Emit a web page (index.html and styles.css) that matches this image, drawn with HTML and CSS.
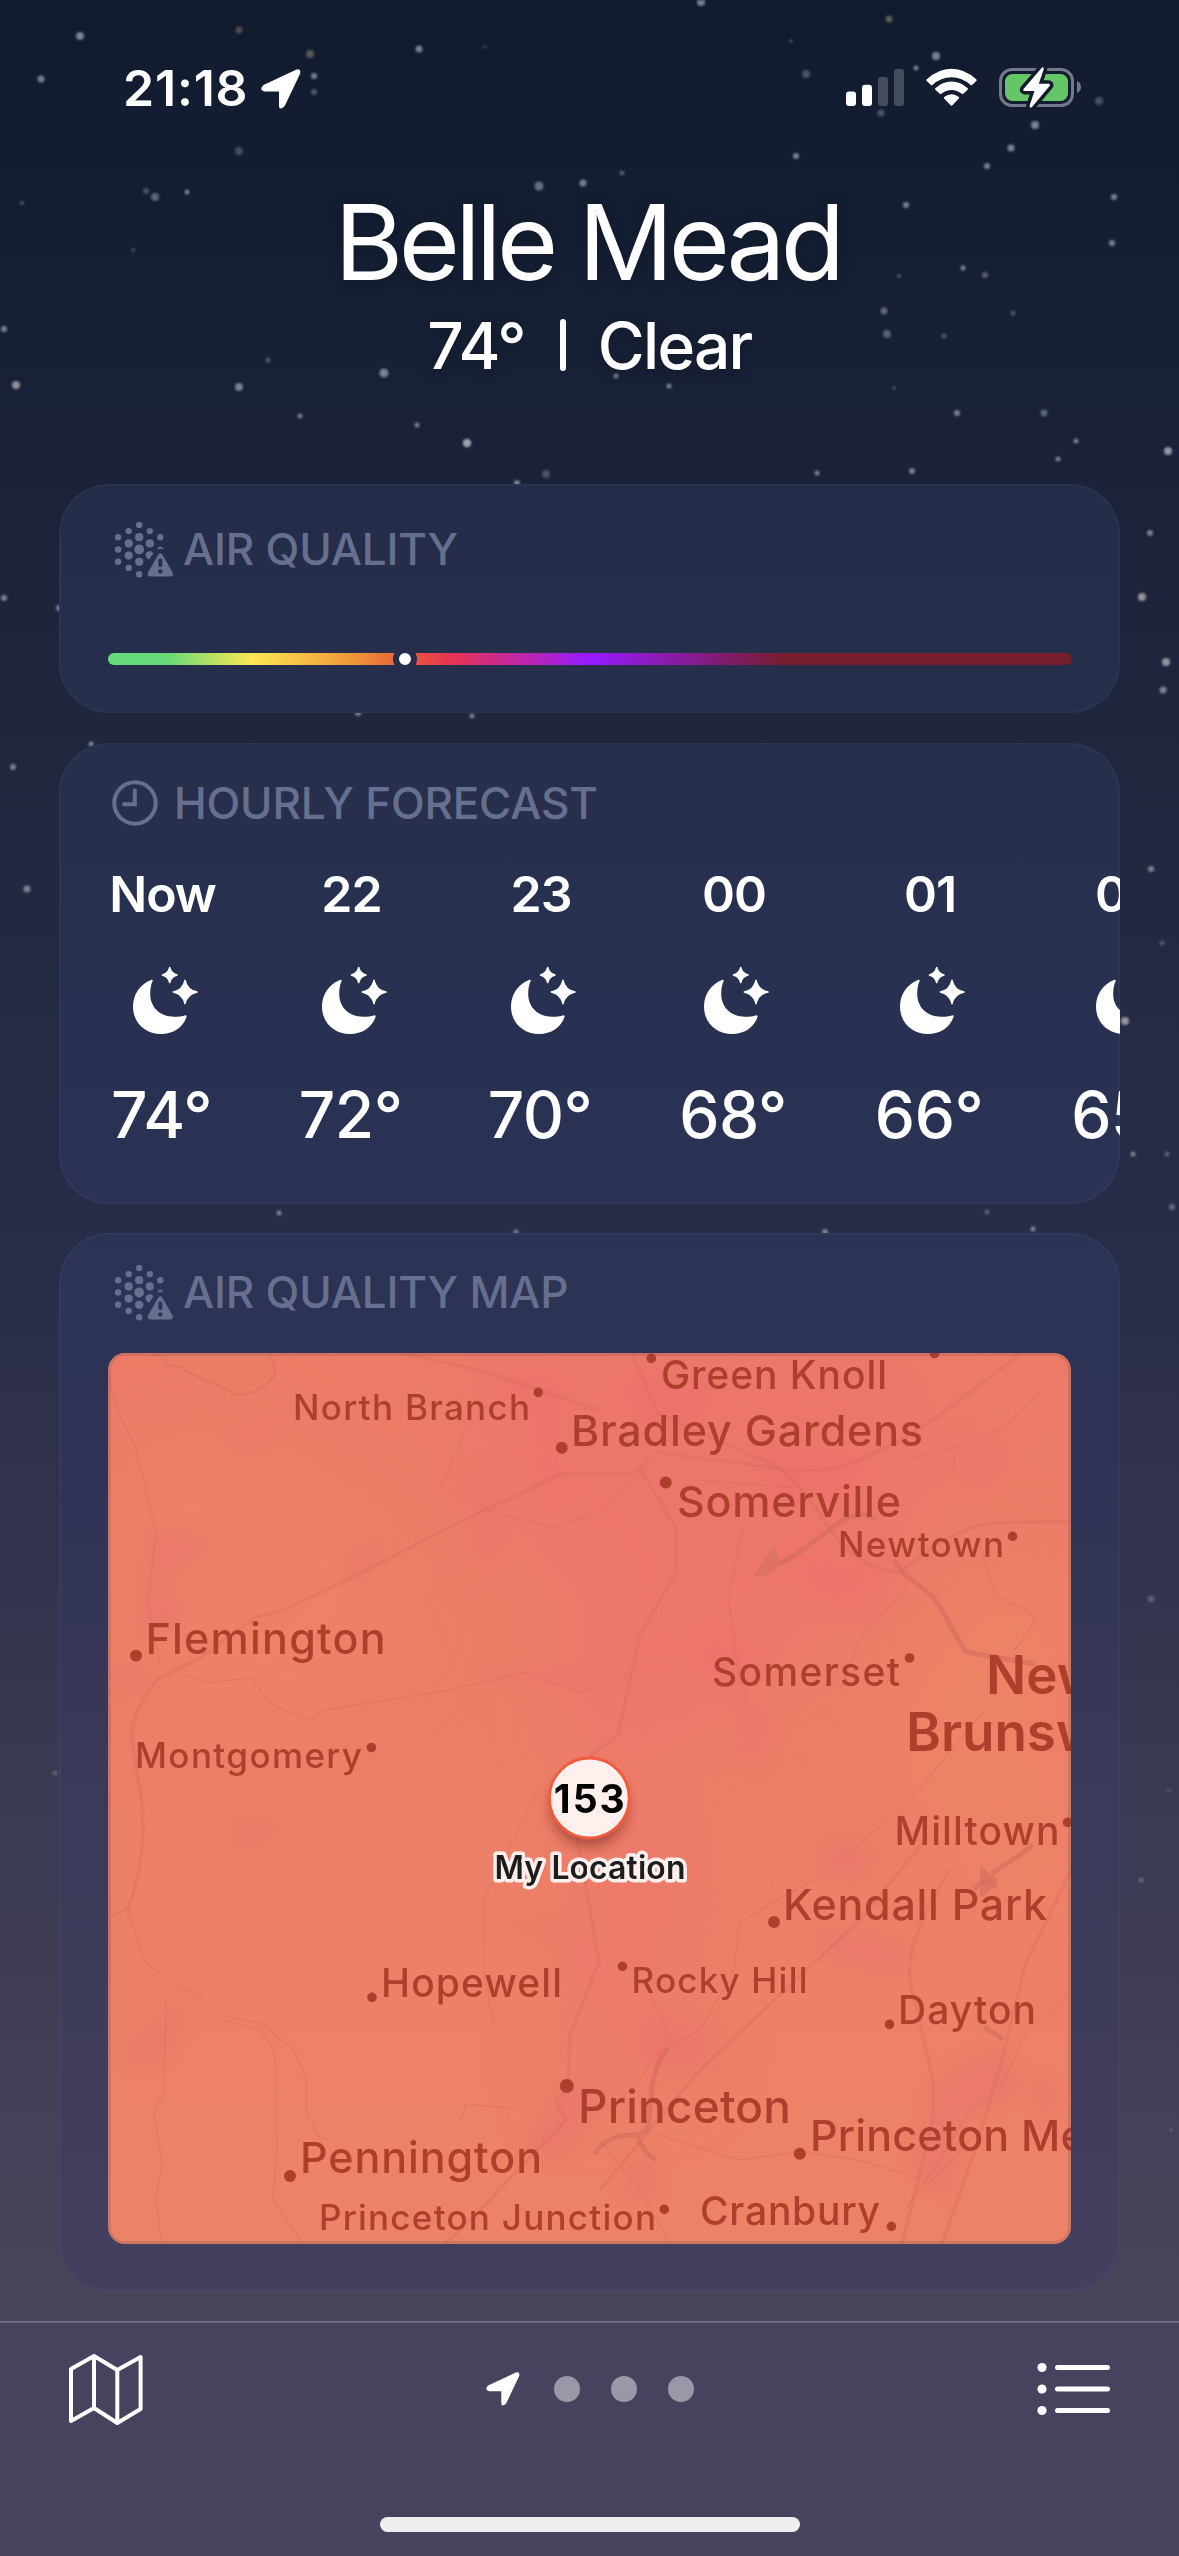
FILE: index.html
```html
<!DOCTYPE html>
<html lang="en">
<head>
    <meta charset="UTF-8">
    <meta name="viewport" content="width=device-width, initial-scale=1.0">
    <title>Weather</title>
    <link rel="stylesheet" href="styles.css">
</head>
<body>
    <!-- shared icons -->
    <svg class="defs" width="0" height="0">
        <symbol id="moon" viewBox="-1 -1 67 69">
            <path d="M19.6 14C17.6 18.500 17.200 23 17.200 27C17.200 40 27 49.700 41 49.700C45.500 49.700 49.500 49.300 52 48.400C53.300 48 53.900 48.800 53.500 50C50 60.500 40 67 28 67C12 67 0 55.500 0 39.500C0 27.500 7 17.500 17.500 13.200C19.200 12.500 20.200 12.800 19.600 14z"/>
            <path class="twinkle" d="M36.700 .5Q38 6.500 44 8Q38 9.500 36.700 15.500Q35.400 9.500 29.400 8Q35.400 6.500 36.700 .5z"/>
            <path class="twinkle" d="M52 13.300Q54 23 64 25Q54 27 52 36.700Q50 27 40.300 25Q50 23 52 13.300z"/>
        </symbol>
        <symbol id="aqi" viewBox="0 0 62 58">
            <g>
                <circle cx="28.200" cy="28.500" r="4.900"/>
                <circle cx="28.200" cy="16.200" r="4.100"/><circle cx="28.200" cy="40.800" r="4.100"/>
                <circle cx="17.700" cy="22.400" r="4.100"/><circle cx="38.800" cy="22.400" r="4.100"/>
                <circle cx="17.700" cy="34.600" r="4.100"/><path d="M35 36a4.100 4.100 0 1 1 7.500 -3.400l-4.500 5.800a4 4 0 0 1-3-2.400z"/>
                <circle cx="28.200" cy="3.900" r="3.200"/><circle cx="28.200" cy="53.200" r="3.200"/>
                <circle cx="17.700" cy="10.100" r="3.200"/><circle cx="38.800" cy="10.100" r="3.200"/>
                <circle cx="17.700" cy="46.900" r="3.200"/>
                <circle cx="7.100" cy="16.200" r="3.200"/><circle cx="49.300" cy="16.200" r="3.200"/>
                <circle cx="7.100" cy="28.500" r="3.200"/><path d="M46.300 29q3-2.300 6 0q-.5-3.500-3-3.500t-3 3.500z"/>
                <circle cx="7.100" cy="40.800" r="3.200"/>
                <path fill-rule="evenodd" d="M47 34q2.300-3.400 4.600 0l10 17.500q1.300 4-2.600 4h-19.400q-3.900 0-2.600-4zM47.400 38.500v6.500q1.900 2.200 3.800 0v-6.500q-1.900-2-3.800 0zM49.300 48.200a2.200 2.200 0 1 0 .01 0z"/>
            </g>
        </symbol>
        <symbol id="arrow" viewBox="0 0 40 40">
            <path d="M2.500 16L35 .7Q40-1 39.200 4.500L23.700 37Q18 42.500 18 36V22.500H3.500Q-2.500 21 2.500 16z"/>
        </symbol>
    </svg>

    <svg class="stars" viewBox="0 0 1179 2556">
        <g fill="#8b92a4">
            <circle cx="701" cy="2" r="4"/><circle cx="80" cy="36" r="4"/><circle cx="239" cy="30" r="3.500" fill="#5c5356"/>
            <circle cx="889" cy="19" r="3.500" fill="#6c6666"/><circle cx="41" cy="79" r="3.500"/><circle cx="419" cy="49" r="3.500"/>
            <circle cx="310" cy="54" r="4" fill="#66605f"/><circle cx="314" cy="76" r="3"/><circle cx="314" cy="92" r="3" fill="#5d6475"/>
            <circle cx="485" cy="47" r="2" fill="#3b4458"/><circle cx="791" cy="41" r="2" fill="#4b5265"/><circle cx="936" cy="56" r="4"/>
            <circle cx="806" cy="74" r="4" fill="#535c70"/><circle cx="916" cy="68" r="2.500"/><circle cx="881" cy="113" r="3.500" fill="#555e74"/>
            <circle cx="1035" cy="125" r="4"/><circle cx="1099" cy="101" r="4" fill="#4d5970"/><circle cx="1011" cy="148" r="3.500"/>
            <circle cx="796" cy="156" r="3"/><circle cx="987" cy="166" r="3"/><circle cx="239" cy="151" r="4" fill="#4d566b"/>
            <circle cx="622" cy="173" r="2.500" fill="#5f6472"/><circle cx="539" cy="186" r="4.500" fill="#727b8d"/><circle cx="583" cy="183" r="3.500"/>
            <circle cx="146" cy="191" r="3" fill="#525b70"/><circle cx="155" cy="197" r="4" fill="#697288"/><circle cx="187" cy="192" r="2.500"/>
            <circle cx="22" cy="203" r="2" fill="#5b6477"/><circle cx="906" cy="205" r="3"/><circle cx="1114" cy="197" r="3"/>
            <circle cx="1112" cy="243" r="3"/><circle cx="963" cy="268" r="2.500"/><circle cx="985" cy="275" r="3" fill="#6a6a72"/>
            <circle cx="899" cy="276" r="2" fill="#5d6577"/><circle cx="133" cy="250" r="2" fill="#4d566b"/><circle cx="4" cy="329" r="3"/>
            <circle cx="884" cy="311" r="3.500" fill="#737581"/><circle cx="1013" cy="313" r="2.500" fill="#565f75"/><circle cx="887" cy="334" r="4" fill="#626c82"/>
            <circle cx="944" cy="336" r="2.500" fill="#696364"/><circle cx="384" cy="373" r="4.500"/><circle cx="268" cy="360" r="2.500" fill="#596178"/>
            <circle cx="16" cy="385" r="4" fill="#a8a4aa"/><circle cx="239" cy="387" r="4"/><circle cx="616" cy="376" r="2.500"/>
            <circle cx="669" cy="386" r="2.500"/><circle cx="894" cy="388" r="2" fill="#4d566b"/><circle cx="300" cy="416" r="2.500"/>
            <circle cx="417" cy="425" r="2.500"/><circle cx="467" cy="443" r="4.200" fill="#b4b8c4"/><circle cx="957" cy="413" r="3"/>
            <circle cx="1044" cy="413" r="3.500" fill="#68738a"/><circle cx="1076" cy="441" r="2.500"/><circle cx="1168" cy="451" r="4" fill="#a8adba"/>
            <circle cx="1058" cy="459" r="2.500"/><circle cx="912" cy="471" r="3"/><circle cx="817" cy="473" r="2.500"/>
            <circle cx="546" cy="474" r="4" fill="#535c72"/><circle cx="517" cy="483" r="3"/><circle cx="59" cy="608" r="3"/>
            <circle cx="358" cy="713" r="3"/><circle cx="472" cy="716" r="2.500"/><circle cx="91" cy="744" r="2.500"/>
            <circle cx="1150" cy="533" r="3"/><circle cx="1142" cy="597" r="4" fill="#aaa7af"/><circle cx="1166" cy="662" r="4" fill="#aaa7b2"/>
            <circle cx="1163" cy="690" r="3.500"/><circle cx="13" cy="767" r="3"/><circle cx="4" cy="598" r="3"/>
            <circle cx="27" cy="889" r="3.500"/><circle cx="1151" cy="869" r="3"/><circle cx="1162" cy="943" r="2.500" fill="#5d6074"/>
            <circle cx="1125" cy="1021" r="4" fill="#aaa5ab"/><circle cx="1133" cy="1154" r="2.500"/><circle cx="1167" cy="1154" r="2.500" fill="#6a6b80"/>
            <circle cx="1172" cy="1207" r="3" fill="#70738a"/><circle cx="987" cy="1212" r="2.500" fill="#6d6c7c"/><circle cx="279" cy="1213" r="2.500"/>
            <circle cx="1033" cy="1229" r="2.500"/><circle cx="825" cy="1232" r="3"/><circle cx="516" cy="1232" r="2.500"/>
            <circle cx="1151" cy="1599" r="3" fill="#6d6e85"/><circle cx="55" cy="1773" r="2.500" fill="#666779"/><circle cx="1169" cy="1790" r="2.500" fill="#565467"/>
            <circle cx="1141" cy="1880" r="2.500" fill="#6f6f84"/><circle cx="1171" cy="2130" r="2" fill="#66667a"/>
        </g>
    </svg>

    <div class="status-bar">
        <div class="status-time">
            <span class="clock">21:18</span>
            <svg class="gps" viewBox="0 0 40 40"><use href="#arrow"/></svg>
        </div>
        <svg class="status-icons" viewBox="846 66 237 44">
            <!-- signal -->
            <rect x="846" y="91.500" width="10" height="14.500" rx="3"/>
            <rect x="862" y="84.700" width="10" height="21.300" rx="3"/>
            <rect x="878" y="77" width="10" height="29" rx="3" opacity=".22"/>
            <rect x="894" y="69" width="10" height="37" rx="3" opacity=".22"/>
            <!-- wifi -->
            <path d="M926.500 79.500Q938 68.700 951.500 68.700T976.500 79.500Q977 80.200 976.300 81L972 85Q971.300 85.500 970.600 85Q962 77.300 951.500 77.300T932.400 85Q931.700 85.500 931 85L926.700 81Q926 80.200 926.500 79.500z"/>
            <path d="M935.300 88.300Q942.500 81.500 951.500 81.500T967.700 88.300Q968.300 89 967.600 89.700L963.300 93.700Q962.500 94.300 961.800 93.700Q957 89.900 951.500 89.900T941.200 93.700Q940.500 94.300 939.700 93.700L935.400 89.700Q934.700 89 935.300 88.300z"/>
            <path d="M944.200 97Q947.500 94.300 951.500 94.300T958.800 97Q959.400 97.700 958.800 98.400L952.400 105.300Q951.500 106.200 950.600 105.300L944.200 98.400Q943.600 97.700 944.200 97z"/>
            <!-- battery -->
            <rect x="1000.500" y="69.500" width="72" height="36" rx="11.500" fill="none" stroke="#747a89" stroke-width="3"/>
            <path d="M1077 81Q1081 83 1081 87T1077 93z" fill="#747a89"/>
            <rect x="1005" y="74" width="63" height="27" rx="7.500" fill="#65c567"/>
            <path class="bolt" d="M1042 67.500L1023.500 89Q1022.600 91 1025 91H1034.500L1029.500 106Q1030 109 1032 107L1049.800 85.800Q1050.500 83.800 1048.300 83.800H1038.800L1043.800 69Q1043.500 66.300 1042 67.500z"/>
        </svg>
    </div>

    <header class="location">
        <h1>Belle Mead</h1>
        <p class="conditions"><span class="now-temp">74°</span><i class="divider"></i><span class="sky">Clear</span></p>
    </header>

    <main class="cards">
        <section class="card card-air">
            <h2 class="air-title"><svg class="aqi-icon"><use href="#aqi"/></svg><span>AIR QUALITY</span></h2>
            <div class="gauge"><span class="gauge-dot"></span></div>
        </section>

        <section class="card card-hourly">
            <h2 class="hourly-title">
                <svg class="clock-icon" viewBox="0 0 46 46"><circle cx="23" cy="23" r="20.700"/><path d="M22.800 10.500V24.300H12"/></svg>
                <span>HOURLY FORECAST</span>
            </h2>
            <div class="hours">
                <div class="hour"><b class="now">Now</b><svg><use href="#moon"/></svg><span>74°</span></div>
                <div class="hour"><b>22</b><svg><use href="#moon"/></svg><span>72°</span></div>
                <div class="hour"><b>23</b><svg><use href="#moon"/></svg><span>70°</span></div>
                <div class="hour"><b>00</b><svg><use href="#moon"/></svg><span>68°</span></div>
                <div class="hour"><b>01</b><svg><use href="#moon"/></svg><span>66°</span></div>
                <div class="hour"><b>02</b><svg><use href="#moon"/></svg><span>65°</span></div>
            </div>
        </section>

        <section class="card card-map">
            <h2 class="air-title"><svg class="aqi-icon"><use href="#aqi"/></svg><span class="map-title">AIR QUALITY MAP</span></h2>
            <svg class="map" viewBox="108 1353 963 891">
                <defs>
                    <linearGradient id="land" x1="0" y1="0" x2="0" y2="1">
                        <stop offset="0" stop-color="#ed7b68"/>
                        <stop offset=".35" stop-color="#ed7e68"/>
                        <stop offset="1" stop-color="#ec8368"/>
                    </linearGradient>
                    <filter id="soft" x="-50%" y="-50%" width="200%" height="200%"><feGaussianBlur stdDeviation="9"/></filter>
                    <filter id="softer" x="-50%" y="-50%" width="200%" height="200%"><feGaussianBlur stdDeviation="38"/></filter>
                    <filter id="pin-shadow" x="-50%" y="-50%" width="200%" height="200%"><feGaussianBlur stdDeviation="7"/></filter>
                </defs>
                <rect x="108" y="1353" width="963" height="891" fill="url(#land)"/>
                <g filter="url(#softer)">
                    <path fill="#ed766c" d="M480 1340L860 1330L950 1420L900 1560L840 1600L740 1700L640 1760L560 1730L590 1600L480 1500z"/>
                    <path fill="#ec8467" d="M110 1440L260 1420L400 1520L420 1640L300 1740L110 1700z" opacity=".6"/>
                    <path fill="#ec8567" d="M930 1620L1071 1540V1950L960 1860L880 1760z" opacity=".8"/>
                    <path fill="#ee786b" d="M590 1790L700 1830L680 2080L570 2100z" opacity=".8"/>
                </g>
                <!-- pollution patches -->
                <g class="patches" filter="url(#soft)">
                    <path d="M240 1430L290 1415L260 1448L232 1448zM490 1375L560 1375L555 1480L545 1520L530 1400L490 1390z"/>
                    <path d="M440 1470L500 1490L495 1550L480 1565L475 1490zM150 1530L220 1540L160 1580L190 1620L140 1640z"/>
                    <path d="M350 1550L385 1545L355 1590zM110 1668L150 1672L140 1690L115 1685zM470 1670L560 1670L610 1685L520 1680z"/>
                    <path d="M620 1375L720 1370L700 1420L640 1430zM760 1450L860 1455L850 1510L770 1500zM800 1560L900 1560L870 1630L810 1600z"/>
                    <path d="M960 1430L1010 1450L990 1490L960 1475zM700 1640L770 1650L740 1690L710 1680zM740 1700L775 1720L760 1770L735 1750z"/>
                    <path d="M830 1840L870 1850L860 1880L825 1870zM820 1930L860 1935L920 1950L900 1970L830 1960zM650 2020L720 2030L710 2070L640 2060z"/>
                    <path d="M570 2080L610 2090L560 2160L520 2150zM910 2170L940 2080L1000 2050L1020 2090L960 2120L950 2200z"/>
                    <path d="M470 1920L560 1930L600 2000L585 1940zM150 2030L190 2000L160 2060L120 2060zM230 1830L275 1825L250 1845z"/>
                    <path d="M640 2150L665 2190L620 2200zM1030 2080L1060 2090L1045 2120z"/>
                </g>
                <g class="water">
                    <path class="lake" d="M151 1353Q165 1356 169 1365Q180 1366 190 1373L223 1388L236 1395Q258 1394 269 1378L262 1353z"/>
                    <path class="shore" d="M151 1354Q165 1356 169 1365Q180 1366 190 1373L223 1388L236 1395Q262 1394 275 1375Q276 1368 269 1353"/>
                    <path d="M753 1577L759 1567L775 1545L779 1561L800 1551L786 1562L765 1576z"/>
                    <path class="river" d="M780 1564L800 1552L825 1533L846 1518L862 1514L876 1519M893 1560L903 1573L932 1596Q940 1605 950 1625L966 1652L1035 1664"/>
                    <path d="M980 1865L998 1880L990 1891L980 1898z"/>
                    <path class="river" d="M992 1873L1008 1863L1033 1845M984 1880L974 1889M986 1881L996 1887M984 2027L1003 2039"/>
                    <path class="river" d="M668 2048Q654 2066 652 2088L648 2128Q644 2135 630 2135Q606 2136 594 2154M638 2134Q640 2150 656 2160"/>
                </g>
                <g class="roads">
                    <path class="wide" d="M108 1918L128 1908Q150 1850 140 1790L131 1735Q135 1705 158 1679L200 1658L256 1617L280 1611Q330 1590 440 1532L563 1473H634L660 1452Q680 1456 770 1467Q800 1475 840 1467Q890 1450 940 1415L1022 1353"/>
                    <path class="wide" d="M632 1353L658 1414L770 1463Q800 1480 830 1530Q860 1570 900 1572Q950 1530 990 1523L1071 1521"/>
                    <path class="wide" d="M640 1468L676 1528V1572L640 1635L618 1735L592 1755L570 1800Q585 1880 599 1962L570 2035L568 2090L555 2100L566 2120L480 2210L445 2244"/>
                    <path class="wide" d="M1071 1870L1025 1965L1002 2060L975 2150L942 2244M600 2190L700 2070L860 1920L925 1840"/>
                    <path class="wide" d="M950 1870Q905 1940 910 1980L933 2080V2120L902 2244M400 1353L480 1370L600 1410"/>
                    <path d="M108 1375Q115 1410 135 1445L156 1533L148 1600L160 1665M176 1670L205 1683L251 1678L272 1705L309 1721L325 1710L450 1690L526 1672L578 1692L640 1670"/>
                    <path d="M128 1909L144 1960L172 1984L195 1992L225 2020L261 2031L275 2052L277 2150L273 2200L303 2244M166 1997L164 2090L154 2115L162 2160L156 2200L162 2244"/>
                    <path d="M225 2016L262 2024L295 2052L306 2080V2110L320 2140M540 1785L484 1900V1972L494 2028M467 1427L441 1486L497 1514L557 1528L600 1510L640 1475"/>
                    <path d="M905 1460L950 1448L1000 1430L1071 1365M955 1450L953 1470L920 1495L880 1520M700 1480L800 1488M745 1520L728 1600L740 1680L750 1710"/>
                    <path d="M980 1545L997 1596L1030 1612L1035 1620L1015 1650M908 1585L860 1640L840 1690M1071 1990L1025 2035L1000 2090L970 2110L940 2160L905 2210M655 2134L680 2142L740 2160L800 2152L860 2160L930 2183L970 2140"/>
                    <path d="M650 1994L670 2035L640 2080M740 1922L830 1870L910 1800L985 1710M740 1922L734 1970L700 2030L665 2050M460 2120L466 2104L510 2108M600 2140L640 2190L670 2244"/>
                </g>
                <g class="places">
                    <circle cx="538.200" cy="1392.400" r="4.800"/><circle cx="561.800" cy="1447.800" r="6"/><circle cx="651.300" cy="1358.400" r="4.800"/>
                    <circle cx="934.600" cy="1353.500" r="4.800"/><circle cx="665.700" cy="1482.600" r="6"/><circle cx="1012.500" cy="1536.300" r="4.800"/>
                    <circle cx="136" cy="1655.800" r="6"/><circle cx="909.500" cy="1658" r="4.800"/><circle cx="371.400" cy="1747.500" r="4.800"/>
                    <circle cx="1067.500" cy="1822.400" r="4.800"/><circle cx="774" cy="1922" r="6"/><circle cx="622.500" cy="1966.400" r="4.800"/>
                    <circle cx="889.500" cy="2024.400" r="4.800"/><circle cx="372" cy="1997.400" r="4.800"/><circle cx="566.800" cy="2086" r="7"/>
                    <circle cx="290" cy="2176" r="6"/><circle cx="799.800" cy="2153.700" r="6"/><circle cx="664.300" cy="2209.400" r="4.800"/>
                    <circle cx="891.400" cy="2226.400" r="4.800"/>
                    <text class="sm" x="293" y="1419.700" textLength="237">North Branch</text>
                    <text class="md" x="661" y="1388.800" textLength="226">Green Knoll</text>
                    <text class="lg" x="571" y="1445.800" textLength="352">Bradley Gardens</text>
                    <text class="lg" x="677" y="1516.600" textLength="224">Somerville</text>
                    <text class="sm" x="838" y="1556.500" textLength="166">Newtown</text>
                    <text class="lg" x="145.500" y="1654.200" textLength="240">Flemington</text>
                    <text class="md" x="712" y="1686.200" textLength="188">Somerset</text>
                    <text class="sm" x="135" y="1767.600" textLength="227">Montgomery</text>
                    <text class="city" x="986" y="1693.700">New</text>
                    <text class="city" x="906" y="1750.600">Brunswick</text>
                    <text class="md" x="894.500" y="1845.300" textLength="165">Milltown</text>
                    <text class="lg" x="783" y="1919.700" textLength="264">Kendall Park</text>
                    <text class="sm" x="631.500" y="1992.700" textLength="176">Rocky Hill</text>
                    <text class="md" x="381" y="1996.700" textLength="181">Hopewell</text>
                    <text class="md" x="898" y="2023.700" textLength="138">Dayton</text>
                    <text class="xl" x="578" y="2122.700" textLength="213">Princeton</text>
                    <text class="lg" x="810" y="2151" letter-spacing=".2">Princeton Meadows</text>
                    <text class="lg" x="300" y="2173.300" textLength="242">Pennington</text>
                    <text class="sm" x="319" y="2229.700" textLength="337">Princeton Junction</text>
                    <text class="md" x="700" y="2225.300" textLength="180">Cranbury</text>
                </g>
                <!-- current location -->
                <circle cx="589.300" cy="1808" r="38" fill="#5a1408" opacity=".5" filter="url(#pin-shadow)"/>
                <circle cx="589.300" cy="1798" r="40" fill="#fff0ee" stroke="#f05c3c" stroke-width="3"/>
                <text class="pin-value" x="589.300" y="1813" textLength="71">153</text>
                <text class="pin-label" x="590" y="1879.300" textLength="191">My Location</text>
                <rect class="map-edge" x="109.500" y="1354.500" width="960" height="888" rx="15"/>
            </svg>
        </section>
    </main>

    <footer class="toolbar">
        <svg class="map-icon" viewBox="69 2353 74 72">
            <path d="M71 2369L94 2356L117.300 2370L140.600 2357V2409L117.300 2423L94 2408L71 2421zM94 2356V2408M117.300 2370V2423"/>
        </svg>
        <div class="pages">
            <svg viewBox="0 0 40 40"><use href="#arrow"/></svg>
            <i></i><i></i><i></i>
        </div>
        <svg class="list-icon" viewBox="1037 2361 74 54">
            <path d="M1057.500 2366.500H1107.500M1057.500 2388H1107.500M1057.500 2409.500H1107.500"/>
            <circle cx="1042" cy="2366.500" r="4.600"/><circle cx="1042" cy="2388" r="4.600"/><circle cx="1042" cy="2409.500" r="4.600"/>
        </svg>
        <div class="home-indicator"></div>
    </footer>
</body>
</html>
```
FILE: styles.css
```css
* {
    box-sizing: border-box;
}
body {
    background: linear-gradient(#121a2e 0, #141e32 200px, #1a2138 440px, #20263e 720px, #282c49 1220px, #31324e 1500px, #3c3b55 1850px, #494459 2320px);
    color: #FFFFFF;
    font-family: Inter, 'Liberation Sans', sans-serif;
    height: 2556px;
    margin: 0;
    overflow: hidden;
    position: relative;
    width: 1179px;
}
h1, h2, p {
    margin: 0;
}
svg {
    display: block;
    fill: #FFFFFF;
}
.defs {
    height: 0;
    position: absolute;
    width: 0;
}
.stars {
    filter: blur(1.2px);
    height: 2556px;
    left: 0;
    opacity: 0.85;
    position: absolute;
    top: 0;
    width: 1179px;
    z-index: -1;
}

.status-bar {
    display: flex;
    height: 176px;
    justify-content: space-between;
    padding: 0 96px 0 123px;
}
.status-time {
    align-items: center;
    display: flex;
    gap: 11px;
    height: 177px;
}
.clock {
    font-size: 50px;
    font-weight: 600;
    letter-spacing: 0.8px;
    padding-bottom: 2px;
    width: 127px;
}
.gps {
    height: 40px;
    width: 40px;
}
.status-icons {
    height: 44px;
    margin-top: 66px;
    width: 237px;
}
.bolt {
    paint-order: stroke;
    stroke: #141b2f;
    stroke-linejoin: round;
    stroke-width: 7px;
}

.location {
    height: 308px;
    text-align: center;
    text-shadow: 0 2px 14px rgba(0, 0, 0, 0.25);
}
h1 {
    font-size: 105px;
    font-weight: 400;
    letter-spacing: -4.6px;
    line-height: 132px;
    padding-right: 4px;
}
.conditions {
    display: flex;
    font-size: 64px;
    font-weight: 500;
    justify-content: center;
    letter-spacing: -1.7px;
    line-height: 76px;
}
.divider {
    background-color: #FFFFFF;
    border-radius: 3px;
    height: 52px;
    margin: 11px 32px 0 35px;
    width: 6px;
}

.cards {
    display: flex;
    flex-direction: column;
    gap: 30px;
    padding: 0 59px;
}
.card {
    border-radius: 50px;
    box-shadow: inset 0 0 0 2px rgba(255, 255, 255, 0.03);
    overflow: hidden;
}
h2 {
    align-items: center;
    color: #666f8d;
    display: flex;
    font-size: 44px;
    font-weight: 500;
    letter-spacing: -0.2px;
    line-height: 52px;
}
h2 svg {
    fill: #666f8d;
}
.card-air {
    background: linear-gradient(#242c4a, #262f4b);
    height: 229px;
    padding: 37px 48px 0 49px;
}
.air-title {
    height: 58px;
}
.air-title span {
    padding-bottom: 2px;
}
.aqi-icon {
    height: 58px;
    margin: 0 10px 0 3px;
    width: 62px;
}
.gauge {
    align-items: center;
    background: linear-gradient(90deg, #65db7c 0, #66d977 6%, #fde653 15%, #f09b37 25%, #e8643b 30%, #e83350 35.5%, #961bff 50%, #761d2e 70%, #761d2e 100%);
    border-radius: 6px;
    display: flex;
    height: 12px;
    margin-top: 74px;
}
.gauge-dot {
    background-color: #FFFFFF;
    border: 6px solid #252e4b;
    border-radius: 50%;
    height: 24px;
    margin-left: 285px;
    width: 24px;
}

.card-hourly {
    background: linear-gradient(#272f4c, #293152 65%, #2b3255);
    height: 461px;
    margin-bottom: -1px;
    padding-top: 34px;
}
.hourly-title {
    padding-left: 53px;
}
.clock-icon {
    height: 46px;
    width: 46px;
    margin-right: 16px;
}
.clock-icon circle, .clock-icon path {
    fill: none;
    stroke: #666f8d;
    stroke-linecap: round;
    stroke-width: 4px;
}
.hours {
    display: grid;
    grid-template-columns: 189px 189px 190px 196px 196px 196px;
    margin: 35px 0 0 9px;
}
.hour {
    align-items: center;
    display: flex;
    flex-direction: column;
}
.hour b {
    font-size: 50px;
    font-weight: 600;
    height: 60px;
    letter-spacing: -1px;
    line-height: 60px;
}
.hour svg {
    height: 69px;
    margin: 42px 0 42px 5px;
    width: 67px;
}
.hour span {
    font-size: 64px;
    font-weight: 500;
    letter-spacing: -0.5px;
    line-height: 76px;
    padding-right: 2px;
}
.twinkle {
    stroke: #FFFFFF;
    stroke-linejoin: round;
    stroke-width: 1.5px;
}

.card-map {
    background: linear-gradient(#2b3355, #2f3355 20%, #363758 40%, #3e3c5b 70%, #443f5e);
    height: 1059px;
    padding: 31px 48px 0 49px;
}
.map {
    border-radius: 17px;
    height: 891px;
    margin-top: 31px;
    width: 963px;
}
.patches {
    fill: #ec6e70;
    opacity: 0.42;
}
.water path {
    fill: #d9705f;
    opacity: 0.7;
}
.water .shore, .water .river {
    fill: none;
    stroke: #dc735c;
    stroke-width: 2px;
}
.water .river {
    stroke: #d66f60;
    stroke-linejoin: round;
    stroke-width: 5px;
}
.water .lake {
    fill: #e97f67;
}
.roads path {
    fill: none;
    opacity: 0.3;
    stroke: #d5685d;
    stroke-width: 1.5px;
}
.roads .wide {
    stroke-width: 3.5px;
}
.places {
    fill: #ae3f2d;
    font-weight: 500;
}
.sm {
    font-size: 35px;
}
.md {
    font-size: 39px;
}
.lg {
    font-size: 43px;
}
.xl {
    font-size: 46px;
}
.city {
    font-size: 53px;
    font-weight: 600;
}
.pin-value, .pin-label {
    text-anchor: middle;
}
.pin-value {
    fill: #000000;
    font-size: 39px;
    font-weight: 700;
}
.pin-label {
    fill: #1c1e1e;
    font-size: 32px;
    font-weight: 600;
    paint-order: stroke;
    stroke: #fff0ee;
    stroke-linejoin: round;
    stroke-width: 7px;
}
.map-edge {
    fill: none;
    stroke: rgba(90, 70, 70, 0.2);
    stroke-width: 3px;
}

.toolbar {
    align-items: center;
    background-color: #49425f;
    border-top: 2px solid #6e697f;
    display: grid;
    grid-template-columns: 1fr auto 1fr;
    grid-template-rows: 131px auto;
    height: 235px;
    margin-top: 29px;
    padding: 0 68px 0 69px;
}
.map-icon {
    fill: none;
    height: 72px;
    stroke: #FFFFFF;
    stroke-linejoin: round;
    stroke-width: 4px;
    width: 74px;
}
.pages {
    align-items: center;
    display: flex;
    gap: 31px;
}
.pages svg {
    height: 34px;
    margin-right: 3px;
    width: 34px;
}
.pages i {
    background-color: #9b96a8;
    border-radius: 50%;
    height: 26px;
    width: 26px;
}
.list-icon {
    height: 54px;
    justify-self: end;
    width: 74px;
}
.list-icon path {
    stroke: #FFFFFF;
    stroke-linecap: round;
    stroke-width: 5px;
}
.home-indicator {
    align-self: start;
    background-color: #eeeeee;
    border-radius: 8px;
    grid-column: 1 / 4;
    height: 15px;
    justify-self: center;
    margin-top: 63px;
    width: 420px;
}
```
